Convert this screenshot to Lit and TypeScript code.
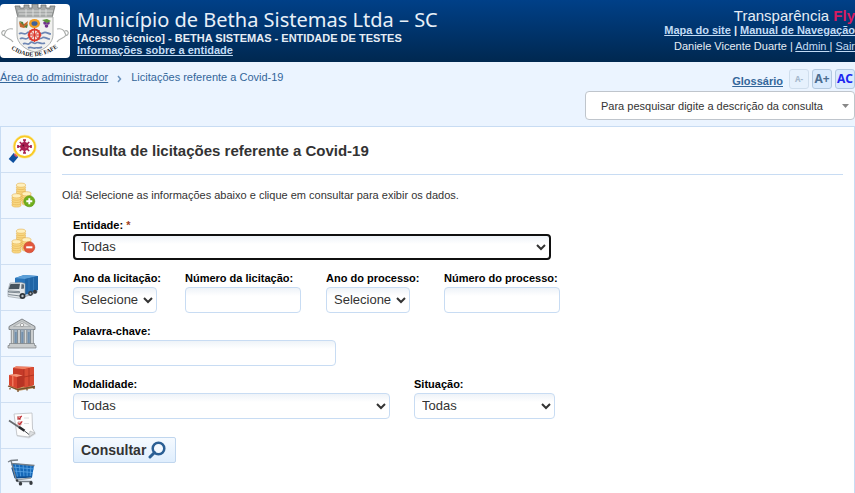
import { LitElement, html, css, svg } from "lit";
import { customElement } from "lit/decorators.js";

const coin = (x: number, y: number, n: number) =>
  svg`${Array.from({ length: n }, (_, i) => svg`
    <ellipse cx=${x} cy=${y - i * 2.3} rx="4.6" ry="2.1" fill=${i === n - 1 ? "#fff0bd" : "#f9d882"} stroke="#e2b050" stroke-width=".6"/>`)}`;

const coins = svg`${coin(14, 20, 7)}${coin(19.5, 24, 5)}${coin(9.500, 26, 5)}`;

const virus = svg`
  <path d="M9 22 4 28" stroke="#0d4f9e" stroke-width="6"/>
  <path d="m8 23 3-3" stroke="#d4566a" stroke-width="3.500"/>
  <circle cx="17.700" cy="13.700" r="10.400" fill="#fff" stroke="#f9cb25" stroke-width="2"/>
  <circle cx="17.700" cy="13.700" r="11.600" fill="none" stroke="#fbe28a" stroke-width=".6"/>
  <path d="M17.500 7v13M11 13.500h13M12.800 9l9.400 9M22.200 9l-9.400 9M16 7h3M16 20h3M11 12v3M24 12v3" stroke="#a3204f" stroke-width="1.700" fill="none"/>
  <circle cx="17.500" cy="13.500" r="4.400" fill="#a91f50"/>
  <circle cx="16.300" cy="12.500" r=".9" fill="#5c1032"/><circle cx="19" cy="14.600" r=".8" fill="#e0648a"/>`;

const plus = svg`${coins}
  <circle cx="22.300" cy="22.300" r="5.500" fill="#6fae1c" stroke="#5b9612" stroke-width=".6"/>
  <path d="M22.300 19.300v6M19.300 22.300h6" stroke="#fff" stroke-width="1.900"/>`;

const minus = svg`${coins}
  <circle cx="22.300" cy="22.300" r="5.500" fill="#e2573c" stroke="#c5432b" stroke-width=".6"/>
  <path d="M19.200 22.300h6.200" stroke="#fff" stroke-width="2"/>`;

const truck = svg`
  <path d="m16 27 14-5 1-2-9 2z" fill="#7a828a" opacity=".6"/>
  <path d="m8 7 9-3 14 1v14l-13 4-10-4z" fill="#2a74b8"/>
  <path d="m8 7 9-3 14 1-13 3z" fill="#5b9fd8"/>
  <path d="m18 8 13-3v14l-13 5z" fill="#2065a6"/>
  <path d="m22 7.500v14M26.500 6.500v14" stroke="#3d82c0" stroke-width=".7"/>
  <path d="m3 12 11-.5 4 1v12l-4 3-13-2v-6z" fill="#e3e7ea" stroke="#8b959d" stroke-width=".6"/>
  <path d="m3.500 13 9.500-.3-.8 5.300-10.500.3z" fill="#46535e"/>
  <path d="m14.500 13 2.500.4v4l-2.800.6z" fill="#5d6a75"/>
  <path d="m1.500 20 11 .5v1.300l-11-.7zM1.300 23.500l12 1.500" stroke="#727d86" stroke-width=".9" fill="none"/>
  <circle cx="15.500" cy="25" r="3" fill="#30363b"/><circle cx="15.500" cy="25" r="1.200" fill="#bcc4ca"/>
  <circle cx="23.500" cy="22.500" r="2.400" fill="#343a40"/><circle cx="28" cy="20.800" r="2" fill="#343a40"/>
  <circle cx="23.500" cy="22.500" r=".9" fill="#bcc4ca"/>`;

const bank = svg`
  <path d="m15 2 13 7.500v3H2v-3z" fill="#c5c8c9" stroke="#777c7f" stroke-width=".9"/>
  <path d="m15 4.500 8.500 5h-17z" fill="#dfe1e1" stroke="#999d9f" stroke-width=".6"/>
  <circle cx="15" cy="8" r="1.700" fill="#f4f5f5" stroke="#888" stroke-width=".7"/>
  <path d="M4 12.500h22V27H4z" fill="#9fb1c2"/>
  <path d="M5.500 13v14M12 13v14M18.500 13v14M25 13v14" stroke="#777d80" stroke-width="3.400"/>
  <path d="M5.500 13v14M12 13v14M18.500 13v14M25 13v14" stroke="#d5d8d8" stroke-width="1.800"/>
  <path d="M8.800 15v12M15.300 15v12M21.800 15v12" stroke="#7290ad" stroke-width="1.800"/>
  <path d="M2.500 26.500h25v2h1.500V31H1v-2.500h1.500z" fill="#cacdce" stroke="#7b8083" stroke-width=".7"/>`;

const boxes = svg`
  <path d="m1 23 10 5 17-3v-2l-14-3z" fill="#c69a61"/>
  <path d="m1 23 10 3.500 17-3M3 25v1.500M11 26v3M20 25v2.500M27 24v2" stroke="#76502c" stroke-width="1.300" fill="none"/>
  <path d="m6 5 3-1.500 18 .5v18l-8 2-13-2z" fill="#c63a28"/>
  <path d="m6 5 3-1.500 18 .5-10 2.300z" fill="#f08062"/>
  <path d="m17 6.300 10-2.300v18l-10 2.500z" fill="#d84c33"/>
  <path d="m17 14 10-2M17 6v17M22 5v18" stroke="#a52c1d" stroke-width=".7"/>
  <path d="m2 12 7-1 7 1.500v11l-6 2-8-3z" fill="#d8452f"/>
  <path d="m2 12 7-1 7 1.500-6 1.500z" fill="#f5967a"/>
  <path d="m10 14 6-1.500v11l-6 2z" fill="#b73424"/>
  <path d="m5 12.700 1.500.4v10.400L5 23z" fill="#f0795c"/>`;

const note = svg`
  <path d="m7 6 18-1 1 15 3 5-7 4.500-12-2z" fill="#c9cccf" opacity=".6"/>
  <path d="m7 5 18-1 .500 16 2.500 4-6 4-12-1.500z" fill="#fdfdfd" stroke="#b4b8bb" stroke-width=".7"/>
  <path d="m22 28 1-6 5 2z" fill="#dddfe1" stroke="#a2a6a9" stroke-width=".5"/>
  <path d="M10.500 7.500h3v3h-3zM11 13h3v3h-3z" fill="#fff" stroke="#b66" stroke-width=".7"/>
  <path d="m11 8.500 1.200 1.300 2.500-3M11.500 14l1.200 1.300 2.500-3" stroke="#c4272c" stroke-width="1.200" fill="none"/>
  <path d="M17 9h5M17 14.500h5" stroke="#d3d5d7" stroke-width=".8"/>
  <path d="m2 11.500 12 8" stroke="#686c70" stroke-width="1.700"/>
  <path d="m12 18 5.500 3.800" stroke="#26292c" stroke-width="2.600"/>
  <path d="m17 21.500 5 4" stroke="#4b4f53" stroke-width="1"/>`;

const cart = svg`
  <path d="m4 8 23 2.500-2 12-16 1z" fill="#1568b8"/>
  <path d="m8 8 2.500 14M12 8.500l1.700 13M16 9l1 12.500M20 9.500l.2 12M24 10l-.8 11.500M5 12l22 2M6.500 16l19.500 1.500" stroke="#5ba5e4" stroke-width=".8" fill="none"/>
  <path d="m5 12.500 3 10 16.500-.5" stroke="#0f4c8e" stroke-width="1.500" fill="none"/>
  <path d="m1 7 3-1.500 7-.5M4 5.500 9 24l2 2.500h14M4 8.300l23.500 2.200" stroke="#777f87" stroke-width="1.300" fill="none"/>
  <path d="m9 25 15-2" stroke="#9aa1a7" stroke-width="1.300"/>
  <ellipse cx="13.500" cy="28.700" rx="1.700" ry="1.900" fill="#373b3f"/><ellipse cx="24" cy="28" rx="1.700" ry="1.900" fill="#373b3f"/>
  <circle cx="10" cy="25.500" r="1.200" fill="#373b3f"/>`;

const menu = [
  ["Licitações Covid-19", virus],
  ["Receitas", plus],
  ["Despesas", minus],
  ["Frotas", truck],
  ["Patrimônio", bank],
  ["Estoque", boxes],
  ["Contratos", note],
  ["Compras", cart],
] as const;

const crest = svg`
  <path d="M15 2h5v2h4V1h5v3h3V0h6v4h3V1h5v3h4V2h5l-3 12H18z" fill="#a5a8a7" stroke="#6d706f" stroke-width=".8"/>
  <path d="M18 7h35M19 10h33M26 5v8M33 5v8M40 5v8M46 5v8" stroke="#e5e6e5" stroke-width=".8" fill="none"/>
  <path d="M17 13h36v18c0 8-8 15-18 17C25 46 17 39 17 31z" fill="#f1f1ef" stroke="#adb0af" stroke-width="1"/>
  <path d="M19 30c3-3 5 2 8-1s5 2 8 0 5 2 8 0 5 1 8 1M20 35c3-3 5 2 8-1s5 2 7 0 5 2 7 0 5 1 8 1M23 40c3-2 5 2 7-1s4 2 6 0 5 2 9 0M28 44c3-2 5 1 7 0s4 1 7-1" fill="none" stroke="#6d86b4" stroke-width="1.700"/>
  <circle cx="34.500" cy="31" r="5.500" fill="#f2d8d2" stroke="#dc392c" stroke-width="2"/>
  <path d="M34.500 24v14M27.500 31h14M29.500 26l10 10M39.500 26l-10 10" stroke="#dc392c" stroke-width="1"/>
  <ellipse cx="34.500" cy="19.500" rx="5.500" ry="4.500" fill="#f09b22"/><ellipse cx="34.500" cy="19.500" rx="3" ry="2.300" fill="#40629b"/>
  <path d="m19 18 5 2 4-3-1 5-3 2-4-1z" fill="#c3682d"/><path d="m19 17 4 1 1 4zM24 23l4-3-1 4z" fill="#50803a"/>
  <circle cx="45" cy="19" r="1.800" fill="#70348c"/><circle cx="48" cy="19" r="1.800" fill="#70348c"/><circle cx="46.500" cy="22" r="1.800" fill="#70348c"/><path d="m42 16 5-1 4 2-4 2z" fill="#5b9438"/>
  <path d="M13 25c-4-1-7 1-8 4s-2 3-3 1 1-4 3-3M4 31c2 4 7 3 9 7M57 25c4-1 7 1 8 4s2 3 3 1-1-4-3-3M66 31c-2 4-7 3-9 7" fill="none" stroke="#aaadab" stroke-width="1.200"/>
  <path id="ribbon" d="M11 45Q35 61 60 42" fill="none"/>
  <text class="motto"><textPath href="#ribbon">CIDADE DE FAFE</textPath></text>`;

@customElement("app-root")
export class AppRoot extends LitElement {
  static styles = css`
    :host {
      display: flex;
      flex-direction: column;
      min-height: 100vh;
      box-sizing: border-box;
      background: #ebf4ff;
      color: #333;
      font: 11px/14px "Liberation Sans", Arial, sans-serif;
      overflow-x: clip;
    }
    * { box-sizing: border-box; }
    svg { display: block; flex: none; }
    .top {
      display: flex;
      justify-content: space-between;
      height: 62px;
      padding-top: 4px;
      background: linear-gradient(#004088, #002850);
      color: #e6edf5;
    }
    .top a { color: #c3dcf5; }
    .brand { display: flex; gap: 7px; white-space: nowrap; }
    .logo { width: 70px; height: 54px; background: #fff; border-radius: 4px; }
    .motto { font: bold 6px "Liberation Serif", serif; fill: #222; }
    .names { padding-top: 4px; font-weight: bold; line-height: 12px; }
    .city { margin: 0; font: 20px/24px "Noto Sans", sans-serif; color: #e8f0f8; }
    .names p { margin: 0; }
    .account { padding-top: 4px; text-align: right; white-space: nowrap; }
    .account p { margin: 0; }
    .product { font-size: 15px; line-height: 16px; }
    .fly { color: #d81b60; }
    .links { font-weight: bold; line-height: 13px; }
    .user { line-height: 18px; }
    .tools {
      display: flex;
      justify-content: space-between;
      height: 64px;
      padding-top: 7px;
    }
    .tools a { color: #33669a; }
    .crumbs { display: flex; gap: 9px; padding-top: 1px; color: #33669a; white-space: nowrap; }
    .crumbs svg { margin-top: 5px; }
    .right { display: flex; flex-direction: column; align-items: flex-end; gap: 2px; }
    .access { display: flex; gap: 3px; }
    .access a { margin: 5px 3px 0 0; font-weight: bold; }
    .access button {
      width: 20px;
      height: 20px;
      padding: 0;
      border: 1px solid #b3c9e0;
      border-radius: 3px;
      background: #d9eafd;
      color: #4b6d91;
      font: bold 12px/16px "Noto Sans", sans-serif;
    }
    .access .small { border-color: #cfdeed; background: #e6f1fd; color: #a5b8cc; font-size: 8px; }
    .access .contrast { color: #1c27f0; }
    .search { position: relative; width: 270px; }
    .search select {
      appearance: none;
      display: block;
      width: 100%;
      height: 29px;
      padding: 0 15px;
      border: 1px solid #bfc5cc;
      border-radius: 4px;
      background: #fff;
      color: #333;
      font: 11px "Liberation Sans", Arial, sans-serif;
    }
    .search svg { position: absolute; right: 6px; top: 13px; pointer-events: none; }
    .body {
      display: flex;
      flex: 1;
      border: solid #c8dcf3;
      border-width: 1px 1px 0;
      background: #fff;
    }
    .side { width: 50px; background: #f0f7ff; }
    .side a {
      display: block;
      height: 46px;
      padding: 6px;
      border-bottom: 1px solid #cfdff2;
    }
    .side a:last-child { border-bottom: 0; }
    .main { flex: 1; padding: 0 11px; }
    h1 {
      margin: 0 0 13px;
      height: 48px;
      border-bottom: 1px solid #c8dcf3;
      font-size: 15px;
      line-height: 48px;
    }
    .hello { margin: 0 0 14px; }
    form { display: flex; flex-direction: column; align-items: flex-start; gap: 9px; padding-left: 11px; }
    .row { display: grid; }
    .four { grid-template-columns: 112px 141px 118px 116px; }
    .two { grid-template-columns: 341px 141px; }
    .field { display: flex; flex-direction: column; align-items: flex-start; }
    label { color: #000; font-weight: bold; line-height: 18px; white-space: nowrap; }
    .req { color: #a0401c; }
    .ctl {
      width: 116px;
      height: 26px;
      padding: 0 4px;
      border: 1px solid #c8dcf3;
      border-radius: 4px;
      background: linear-gradient(#eef3f8, #fff 8px);
      color: #333;
      font: 13px "Liberation Sans", Arial, sans-serif;
    }
    select.ctl { padding: 0 0 1px 3px; }
    .ctl.year { width: 84px; }
    .ctl.entity { width: 478px; border: 2px solid #101010; padding-left: 2px; }
    .ctl.keyword { width: 263px; }
    .ctl.mode { width: 317px; }
    .ctl.status { width: 141px; }
    .go {
      display: flex;
      align-items: center;
      gap: 2px;
      height: 26px;
      margin-top: 9px;
      padding: 0 9px 0 7px;
      border: 1px solid #c0d6ee;
      border-radius: 2px;
      background: linear-gradient(#f5faff, #dfeefd);
      color: #333;
      font: bold 14px "Liberation Sans", Arial, sans-serif;
    }
  `;

  private years(id: string) {
    return html`<select class="ctl year" id=${id}><option>Selecione</option></select>`;
  }

  render() {
    return html`
      <header class="top">
        <div class="brand">
          <svg class="logo" viewBox="0 0 70 54" role="img" aria-label="Brasão">${crest}</svg>
          <div class="names">
            <p class="city">Município de Betha Sistemas Ltda – SC</p>
            <p>[Acesso técnico] - BETHA SISTEMAS - ENTIDADE DE TESTES</p>
            <a href="#entidade">Informações sobre a entidade</a>
          </div>
        </div>
        <div class="account">
          <p class="product">Transparência <b class="fly">Fly</b></p>
          <p class="links"><a href="#mapa">Mapa do site</a> | <a href="#manual">Manual de Navegação</a></p>
          <p class="user">Daniele Vicente Duarte | <a href="#admin">Admin </a>| <a href="#sair">Sair</a></p>
        </div>
      </header>
      <div class="tools">
        <nav class="crumbs">
          <a href="#area">Área do administrador</a>
          <svg width="5" height="8" viewBox="0 0 5 8"><path d="m1 1 2.500 3L1 7" fill="none" stroke="#6b93bd" stroke-width="1.500"/></svg>
          <span>Licitações referente a Covid-19</span>
        </nav>
        <div class="right">
          <div class="access">
            <a href="#glossario">Glossário</a>
            <button class="small">A-</button>
            <button>A+</button>
            <button class="contrast">AC</button>
          </div>
          <div class="search">
            <select aria-label="Pesquisar consulta"><option>Para pesquisar digite a descrição da consulta</option></select>
            <svg width="7" height="4" viewBox="0 0 7 4"><path d="M0 0h7L3.500 4z" fill="#888"/></svg>
          </div>
        </div>
      </div>
      <div class="body">
        <nav class="side">
          ${menu.map(([name, icon]) => html`<a href="#menu" aria-label=${name}><svg width="32" height="32" viewBox="0 0 32 32">${icon}</svg></a>`)}
        </nav>
        <main class="main">
          <h1>Consulta de licitações referente a Covid-19</h1>
          <p class="hello">Olá! Selecione as informações abaixo e clique em consultar para exibir os dados.</p>
          <form>
            <div class="field">
              <label for="entity">Entidade: <span class="req">*</span></label>
              <select class="ctl entity" id="entity"><option>Todas</option></select>
            </div>
            <div class="row four">
              <div class="field"><label for="bidYear">Ano da licitação:</label>${this.years("bidYear")}</div>
              <div class="field"><label for="bidNo">Número da licitação:</label><input class="ctl" id="bidNo"></div>
              <div class="field"><label for="procYear">Ano do processo:</label>${this.years("procYear")}</div>
              <div class="field"><label for="procNo">Número do processo:</label><input class="ctl" id="procNo"></div>
            </div>
            <div class="field">
              <label for="keyword">Palavra-chave:</label>
              <input class="ctl keyword" id="keyword">
            </div>
            <div class="row two">
              <div class="field"><label for="mode">Modalidade:</label><select class="ctl mode" id="mode"><option>Todas</option></select></div>
              <div class="field"><label for="status">Situação:</label><select class="ctl status" id="status"><option>Todas</option></select></div>
            </div>
            <button class="go" type="button">Consultar
              <svg width="18" height="18" viewBox="0 0 18 18"><circle cx="10.500" cy="7.500" r="5.800" fill="#f4f9ff" stroke="#2b5f94" stroke-width="2.500"/><path d="m6.500 11.500-4.500 4.500" stroke="#2b5f94" stroke-width="3" stroke-linecap="round"/></svg>
            </button>
          </form>
        </main>
      </div>
    `;
  }
}
